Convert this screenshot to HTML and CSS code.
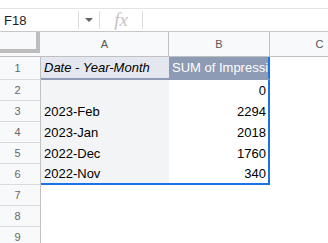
FILE: index.html
```html
<!DOCTYPE html>
<html lang="en">
<head>
    <meta charset="UTF-8">
    <meta name="viewport" content="width=device-width, initial-scale=1.0">
    <title>Pivot</title>
    <link rel="stylesheet" href="styles.css">
</head>
<body>
    <div class="topbar"></div>

    <!-- Name box + formula bar -->
    <div class="formula-bar">
        <div class="name-box">F18</div>
        <div class="sep"></div>
        <div class="dropdown">
            <svg width="8" height="4" viewBox="0 0 8 4"><path d="M0 0h8L4 4z" fill="#5f6368"/></svg>
        </div>
        <div class="sep"></div>
        <div class="fx">fx</div>
        <div class="sep"></div>
    </div>

    <!-- Grid -->
    <div class="sheet">
        <div class="corner"><div class="freeze"></div></div>
        <div class="col-head">A</div>
        <div class="col-head">B</div>
        <div class="col-head">C</div>

        <div class="row-head head-row">1</div>
        <div class="cell pivot-label">Date - Year-Month</div>
        <div class="cell pivot-title">SUM of Impressi</div>
        <div class="cell"></div>

        <div class="row-head">2</div>
        <div class="cell row-label"></div>
        <div class="cell value">0</div>
        <div class="cell"></div>

        <div class="row-head">3</div>
        <div class="cell row-label">2023-Feb</div>
        <div class="cell value">2294</div>
        <div class="cell"></div>

        <div class="row-head">4</div>
        <div class="cell row-label">2023-Jan</div>
        <div class="cell value">2018</div>
        <div class="cell"></div>

        <div class="row-head">5</div>
        <div class="cell row-label">2022-Dec</div>
        <div class="cell value">1760</div>
        <div class="cell"></div>

        <div class="row-head">6</div>
        <div class="cell row-label last">2022-Nov</div>
        <div class="cell value last">340</div>
        <div class="cell"></div>

        <div class="row-head">7</div>
        <div class="cell"></div>
        <div class="cell"></div>
        <div class="cell"></div>

        <div class="row-head">8</div>
        <div class="cell"></div>
        <div class="cell"></div>
        <div class="cell"></div>

        <div class="row-head">9</div>
        <div class="cell"></div>
        <div class="cell"></div>
        <div class="cell"></div>
    </div>
</body>
</html>
```

FILE: styles.css
```css
body {
    margin: 0;
    width: 328px;
    height: 243px;
    overflow: hidden;
    background: #ffffff;
    font-family: "Liberation Sans", Arial, sans-serif;
}
.topbar {
    height: 8px;
    border-bottom: 1px solid #e3e3e3;
}
.formula-bar {
    display: flex;
    align-items: center;
    height: 22px;
    border-bottom: 1px solid #c7c7c7;
}
.name-box {
    width: 74px;
    padding-left: 4px;
    font-size: 13px;
    color: #202124;
}
.sep {
    width: 1px;
    height: 18px;
    background: #dadce0;
}
.dropdown {
    width: 20px;
    display: flex;
    justify-content: center;
    align-items: center;
}
.fx {
    width: 42px;
    text-align: center;
    font-family: "Liberation Serif", serif;
    font-style: italic;
    font-size: 19px;
    line-height: 22px;
    color: #c4c4c4;
}
.sheet {
    display: grid;
    grid-template-columns: 41px 128px 101px 100px;
    grid-template-rows: 25px 23px repeat(8, 21px);
    width: 370px;
    font-size: 13px;
}
.corner {
    background: #f8f9fa;
    border-bottom: 1px solid #c0c0c0;
}
.freeze {
    box-sizing: border-box;
    width: 40px;
    height: 21px;
    border-right: 4px solid #bdbdbd;
    border-bottom: 4px solid #bdbdbd;
}
.col-head {
    box-sizing: border-box;
    display: flex;
    align-items: center;
    justify-content: center;
    background: #f8f9fa;
    border-right: 1px solid #c0c0c0;
    border-bottom: 1px solid #c0c0c0;
    font-size: 11px;
    color: #555555;
}
.row-head {
    box-sizing: border-box;
    display: flex;
    align-items: center;
    justify-content: center;
    padding-right: 5px;
    background: #f8f9fa;
    border-right: 1px solid #c0c0c0;
    border-bottom: 1px solid #dadada;
    font-size: 11px;
    color: #666666;
}
.cell {
    box-sizing: border-box;
    display: flex;
    align-items: center;
    white-space: nowrap;
    overflow: hidden;
    color: #000000;
}
.pivot-label {
    padding-left: 3px;
    background: #e4e7ef;
    border-bottom: 2px solid #8e9bb5;
    font-style: italic;
}
.pivot-title {
    padding-left: 3px;
    background: #8e9bb5;
    border-bottom: 2px solid #8e9bb5;
    border-right: 2px solid #1a73e8;
    color: #ffffff;
}
.row-label {
    padding-left: 3px;
    background: #f3f4f6;
}
.value {
    justify-content: flex-end;
    padding-right: 2px;
    border-right: 2px solid #1a73e8;
}
.last {
    border-bottom: 2px solid #1a73e8;
}
```
